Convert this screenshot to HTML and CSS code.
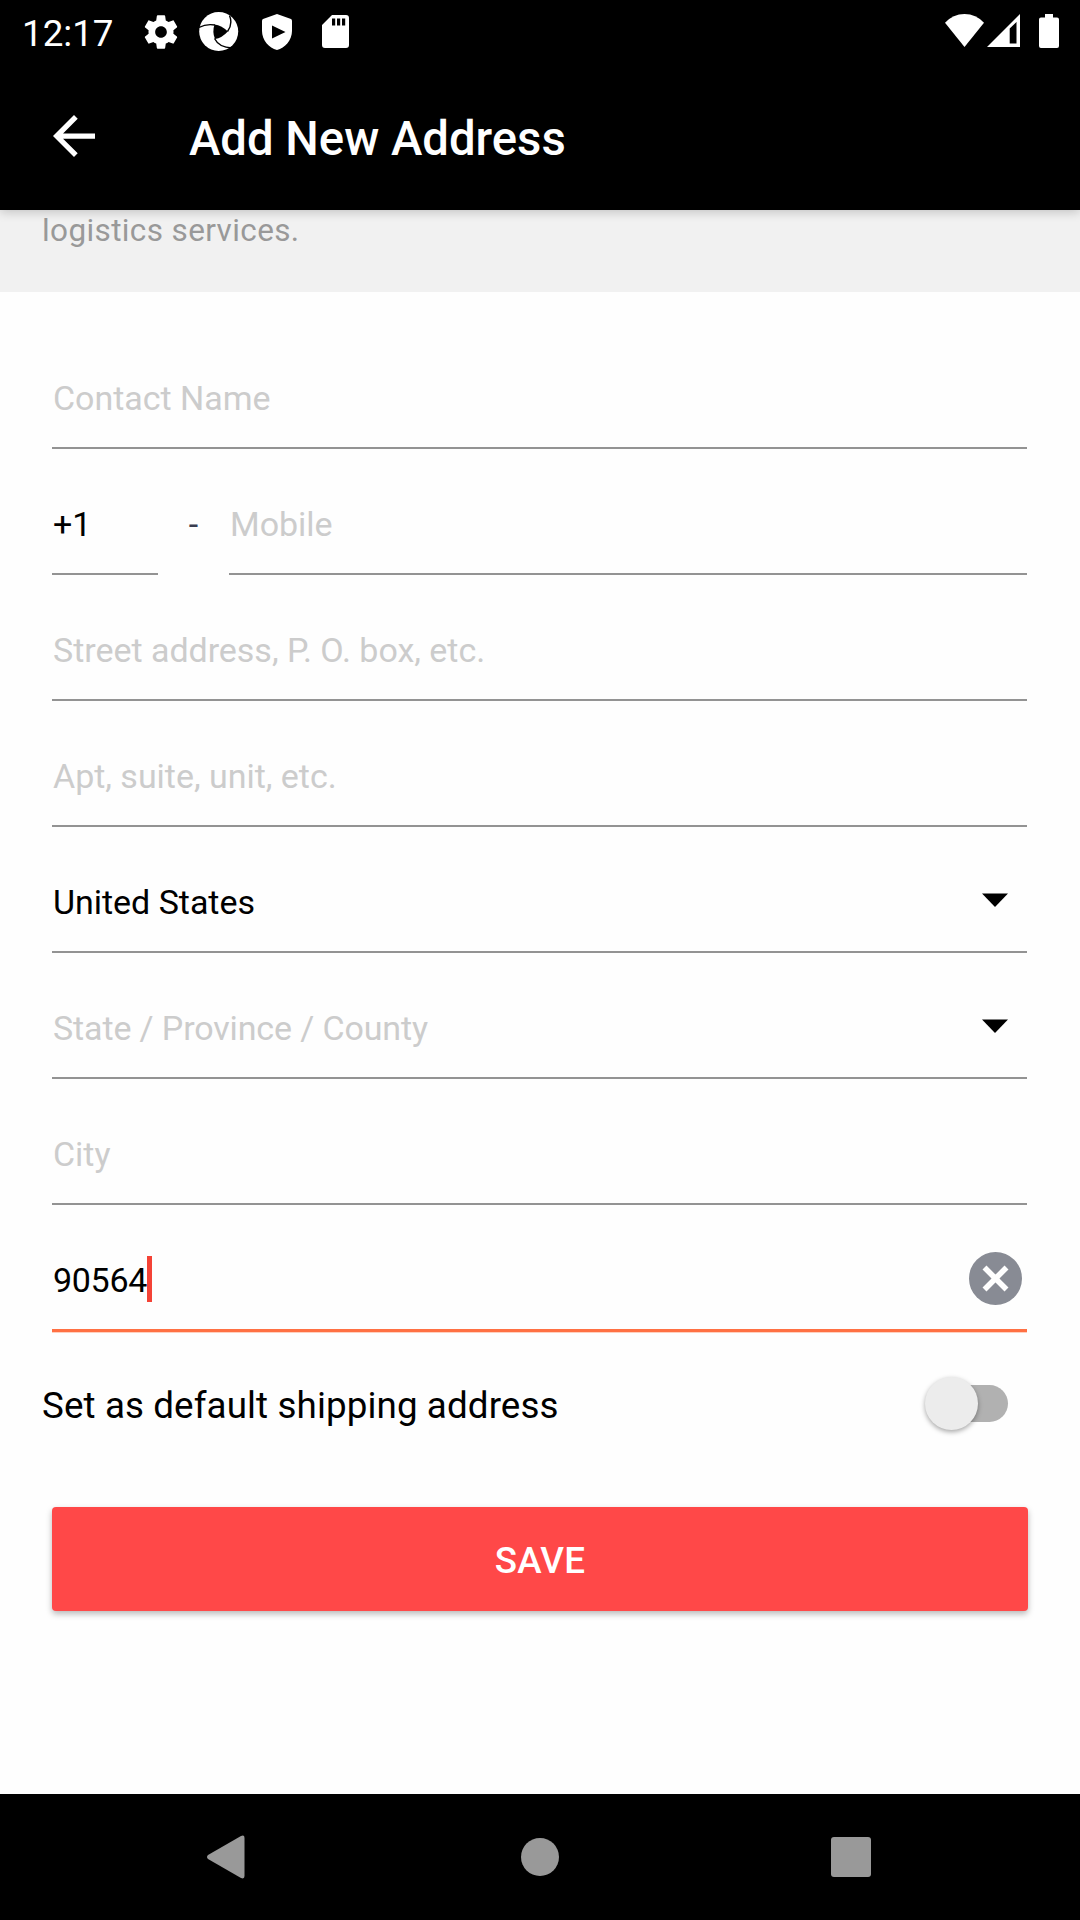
FILE: index.html
```html
<!DOCTYPE html>
<html lang="en">
<head>
<meta charset="utf-8">
<title>Add New Address</title>
<link rel="stylesheet" href="styles.css">
</head>
<body>
<div class="screen">
  <header class="top">
    <div class="status">
      <span class="clock">12:17</span>
      <svg class="s-gear" width="40" height="40" viewBox="0 0 24 24"><path fill="#fff" d="M19.43 12.98c.04-.32.07-.64.07-.98s-.03-.66-.07-.98l2.11-1.65c.19-.15.24-.42.12-.64l-2-3.46c-.12-.22-.39-.3-.61-.22l-2.49 1c-.52-.4-1.08-.73-1.69-.98l-.38-2.65C14.46 2.18 14.25 2 14 2h-4c-.25 0-.46.18-.49.42l-.38 2.65c-.61.25-1.17.59-1.69.98l-2.49-1c-.23-.09-.49 0-.61.22l-2 3.46c-.13.22-.07.49.12.64l2.11 1.65c-.04.32-.07.65-.07.98s.03.66.07.98l-2.11 1.65c-.19.15-.24.42-.12.64l2 3.46c.12.22.39.3.61.22l2.49-1c.52.4 1.08.73 1.69.98l.38 2.65c.03.24.24.42.49.42h4c.25 0 .46-.18.49-.42l.38-2.65c.61-.25 1.17-.59 1.69-.98l2.49 1c.23.09.49 0 .61-.22l2-3.46c.12-.22.07-.49-.12-.64l-2.11-1.65zM12 15.5c-1.93 0-3.5-1.57-3.5-3.5s1.57-3.5 3.500-3.500 3.500 1.570 3.500 3.500-1.570 3.500-3.500 3.500z"/></svg>
      <svg class="s-swirl" width="40" height="40" viewBox="0 0 40 40"><circle cx="19.700" cy="19.500" r="19.500" fill="#fff"/><path d="M15.500 12.500Q23 13.500 28.800 19.500 23 26 16 27 13 20 15.500 12.500Z"/><path fill="none" stroke="#000" stroke-width="1.400" d="M0 15.500Q7 11.500 16 13M30.500 3.500Q34 12 28.500 19.500M15.500 26.500Q20 35.500 33 36"/></svg>
      <svg class="s-shield" width="30" height="36" viewBox="0 0 30 36"><path fill="#fff" fill-rule="evenodd" d="M15 0 29 5Q30 5.500 30 7V17C30 26 23 34 15 36 7 34 0 26 0 17V7Q0 5.500 1 5ZM10 11.500V24.500L23.500 18Z"/></svg>
      <svg class="s-sd" width="27" height="33" viewBox="0 0 27 33"><path fill="#fff" fill-rule="evenodd" d="M10 0H24Q27 0 27 3V30Q27 33 24 33H3Q0 33 0 30V10ZM10 3.500V10.500H13.200V3.500ZM15 3.500V10.500H18.200V3.500ZM20 3.500V10.500H23.200V3.500Z"/></svg>
      <span class="spacer"></span>
      <svg class="s-wifi" width="39" height="33" viewBox="0 0 39 33"><path fill="#fff" d="M0 8.800Q8 0 19.500 0T39 8.800L19.500 33Z"/></svg>
      <svg class="s-cell" width="33" height="33" viewBox="0 0 33 33"><path fill="#fff" fill-rule="evenodd" d="M33 0V33H0ZM22.700 14.500V29.500H29.500V8Z"/></svg>
      <svg class="s-batt" width="20" height="34" viewBox="0 0 20 34"><path fill="#fff" d="M6 0H14V3.500H18Q20 3.500 20 5.500V32Q20 34 18 34H2Q0 34 0 32V5.500Q0 3.500 2 3.500H6Z"/></svg>
    </div>
    <div class="appbar">
      <svg class="back" width="42" height="42" viewBox="0 0 16 16"><path fill="#fff" d="M16 7H3.830l5.590-5.590L8 0 0 8l8 8 1.410-1.410L3.830 9H16z"/></svg>
      <h1 class="title">Add New Address</h1>
    </div>
  </header>
  <div class="notice">logistics services.</div>
  <main class="form">
    <div class="field"><span class="hint">Contact Name</span></div>
    <div class="row">
      <div class="field code"><span class="value">+1</span></div>
      <span class="dash">-</span>
      <div class="field grow"><span class="hint">Mobile</span></div>
    </div>
    <div class="field"><span class="hint">Street address, P. O. box, etc.</span></div>
    <div class="field"><span class="hint">Apt, suite, unit, etc.</span></div>
    <div class="field"><span class="value">United States</span><svg class="caret" width="26" height="14" viewBox="0 0 26 14"><path d="M0 0.500H26L13 14Z"/></svg></div>
    <div class="field"><span class="hint region">State / Province / County</span><svg class="caret" width="26" height="14" viewBox="0 0 26 14"><path d="M0 0.500H26L13 14Z"/></svg></div>
    <div class="field"><span class="hint">City</span></div>
    <div class="field active"><span class="value zip">90564</span><span class="cursor"></span><svg class="clear" width="53" height="53" viewBox="0 0 53 53"><circle cx="26.500" cy="26.500" r="26.500" fill="#888b94"/><path stroke="#fff" stroke-width="5.600" d="M15.500 15.500 37.500 37.500M37.500 15.500 15.500 37.500"/></svg></div>
  </main>
  <div class="default">
    <span class="label">Set as default shipping address</span>
    <span class="switch"><span class="thumb"></span></span>
  </div>
  <button class="save">SAVE</button>
  <nav class="nav">
    <svg width="38" height="44" viewBox="0 0 38 44"><path fill="#999" d="M1 20 34 1Q37.500 -0.500 37.500 3V41Q37.500 44.500 34 43L1 24Q-1 22 1 20Z"/></svg>
    <svg width="38" height="40" viewBox="0 0 38 40"><circle cx="19" cy="20" r="19" fill="#999"/></svg>
    <svg width="40" height="40" viewBox="0 0 40 40"><rect width="40" height="40" rx="3" fill="#999"/></svg>
  </nav>
</div>
</body>
</html>
```
FILE: styles.css
```css
* { box-sizing: border-box; }
body { margin: 0; background: #fff; font-family: Roboto, sans-serif; color: #000; }
svg { display: block; flex: none; }
.screen { width: 1080px; height: 1920px; display: flex; flex-direction: column; overflow: hidden; background: #fefefe; }

.top { height: 210px; flex: none; background: #000; color: #fff; position: relative; z-index: 1; box-shadow: 0 2px 10px rgba(0, 0, 0, .2); }
.status { height: 63px; display: flex; align-items: flex-start; padding-left: 22px; padding-right: 21px; }
.clock { width: 119px; font-size: 36.75px; line-height: 43px; padding-top: 12px; white-space: nowrap; }
.s-gear { margin-top: 12px; }
.s-swirl { margin: 12px 0 0 18px; }
.s-shield { margin: 14px 0 0 23px; }
.s-sd { margin: 15px 0 0 30px; }
.spacer { flex: 1; }
.s-wifi { margin-top: 14px; }
.s-cell { margin: 14px 0 0 3px; }
.s-batt { margin: 14px 0 0 19px; }

.appbar { height: 147px; display: flex; align-items: flex-start; padding-left: 53px; }
.back { margin-top: 52px; }
.title { margin: 48px 0 0 94px; font-size: 47.25px; line-height: 56px; font-weight: 500; white-space: nowrap; }

.notice { height: 82px; flex: none; background: #f1f1f1; color: #999; padding: 1px 0 0 42px; font-size: 31.5px; line-height: 40px; letter-spacing: .38px; }

.form { padding: 31px 53px 0 52px; display: flex; flex-direction: column; }
.field { height: 126px; display: flex; align-items: center; border-bottom: 2px solid #939393; font-size: 34px; line-height: 40px; padding: 26px 0 0 1px; white-space: nowrap; letter-spacing: -.03px; }
.hint { color: #ccc; }
.region { letter-spacing: -.13px; }
.zip { letter-spacing: -.3px; }
.row { display: flex; }
.code { width: 106px; }
.dash { width: 71px; text-align: center; font-size: 34px; line-height: 40px; padding-top: 55px; color: #3a3d50; }
.grow { flex: 1; }
.caret { margin: 0 19px 5px auto; }
.active { height: 127px; border-bottom: 3px solid #ff7043; box-shadow: 0 1px #ffd0bf; }
.cursor { width: 5px; height: 46px; background: #f44336; margin-bottom: 3px; }
.clear { margin: 0 5px 3px auto; }

.default { height: 148px; flex: none; display: flex; align-items: center; padding: 0 72px 0 42px; }
.label { font-size: 36.75px; line-height: 44px; letter-spacing: .11px; margin-top: -1px; }
.switch { position: relative; isolation: isolate; margin: -5px 0 0 auto; width: 83px; height: 53px; }
.switch::before { content: ""; position: absolute; z-index: -1; left: 10px; right: 0; top: 8px; height: 37px; border-radius: 19px; background: #b1b1b1; }
.thumb { display: block; width: 53px; height: 53px; border-radius: 50%; background: #ececec; box-shadow: 0 2px 5px rgba(0, 0, 0, .35); }

.save { margin: 27px 52px 0; height: 104px; flex: none; border: 0; padding: 4px 0 0; border-radius: 4px; background: #ff4848; color: #fff; font: 500 36.75px/44px Roboto, sans-serif; letter-spacing: .2px; box-shadow: 0 3px 6px rgba(0, 0, 0, .28); }

.nav { margin-top: auto; height: 126px; flex: none; background: #000; display: grid; grid-template-columns: 314px 310px 40px; align-items: center; padding-left: 207px; }
```
